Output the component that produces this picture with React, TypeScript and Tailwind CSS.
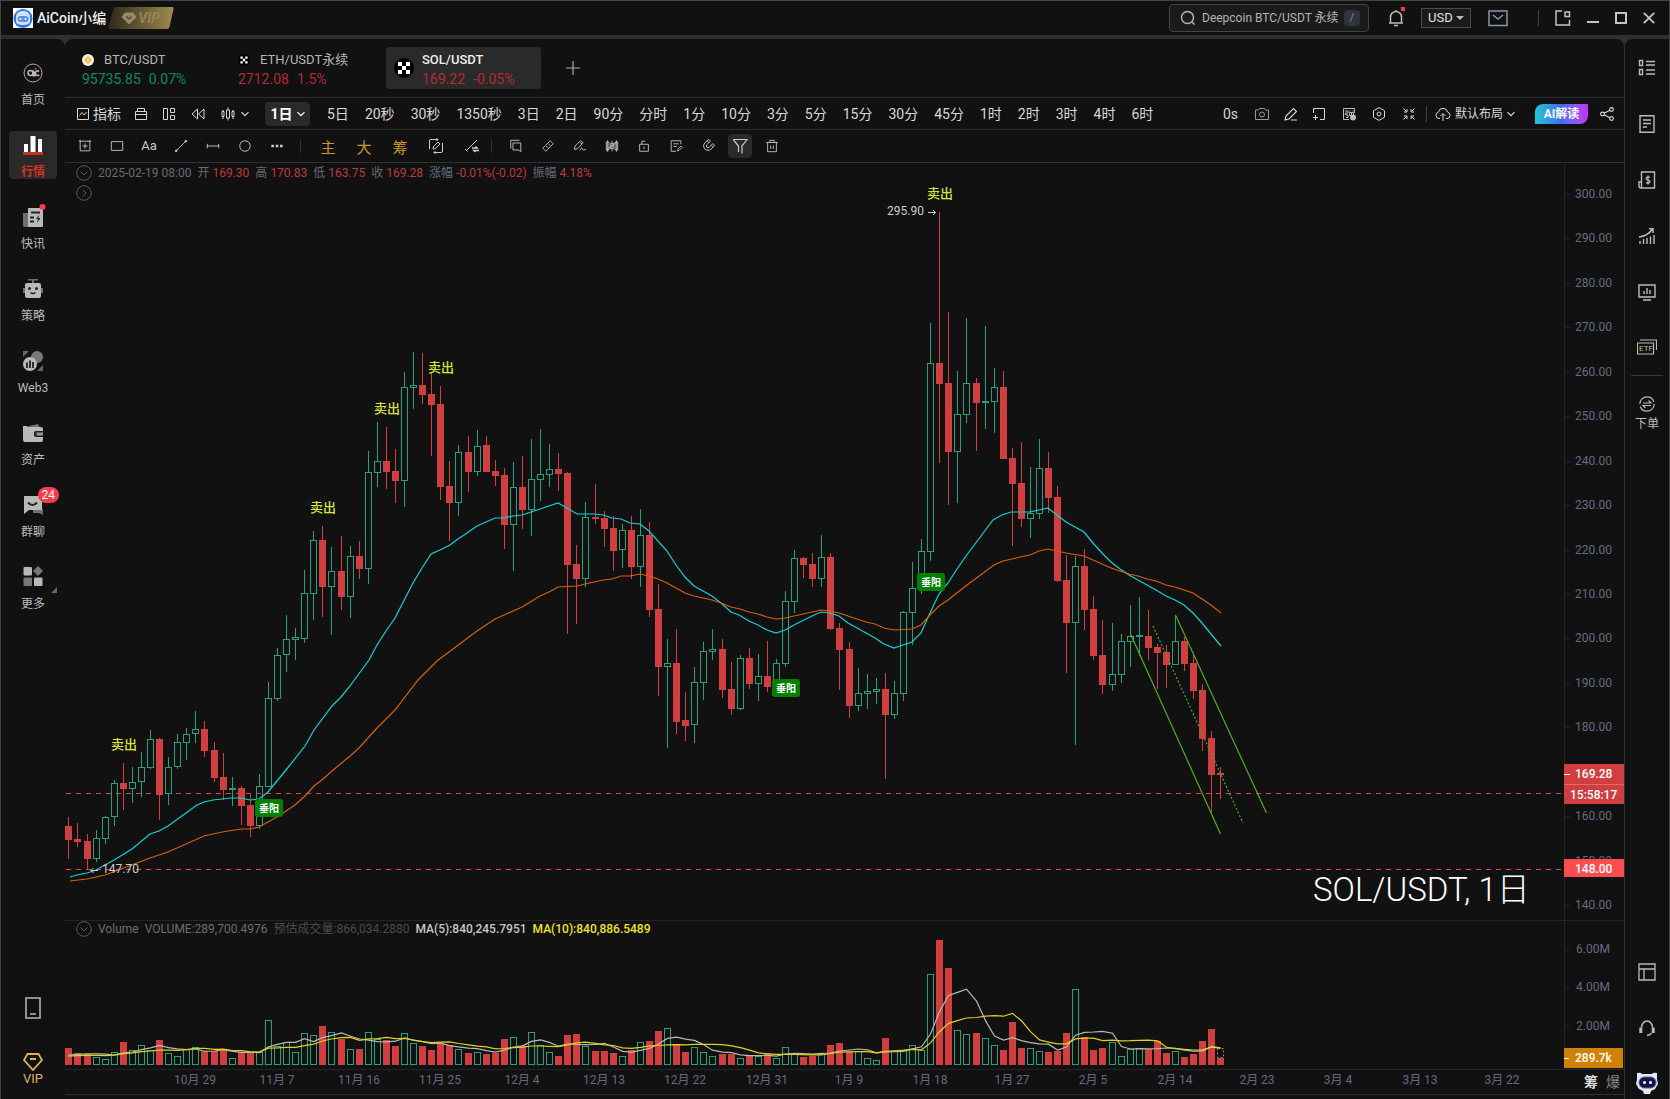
import { useState } from 'react';
import type { ReactNode } from 'react';

type Candle = [string, number, number, number, number, number];

// side, high, body top, body bottom, low, volume height
const candles: Candle[] = [
    ['r', 817, 826, 840, 859, 17], ['r', 823, 839, 842, 847, 12], ['r', 834, 841, 859, 870, 11], ['g', 830, 838, 859, 862, 8],
    ['g', 816, 817, 839, 844, 6], ['g', 780, 783, 817, 826, 13], ['r', 763, 783, 789, 810, 23], ['g', 767, 782, 789, 803, 15],
    ['g', 752, 767, 782, 797, 20], ['g', 730, 739, 768, 769, 15], ['r', 738, 739, 795, 820, 25], ['g', 757, 767, 794, 805, 12],
    ['g', 734, 742, 767, 769, 9], ['g', 728, 734, 743, 760, 16], ['g', 711, 729, 734, 743, 18], ['r', 721, 729, 751, 757, 13],
    ['r', 742, 750, 778, 782, 14], ['r', 753, 777, 790, 800, 16], ['g', 777, 788, 789, 806, 7], ['r', 786, 788, 806, 825, 13],
    ['r', 793, 805, 826, 837, 13], ['g', 774, 786, 826, 829, 13], ['g', 682, 698, 787, 787, 45], ['g', 648, 655, 699, 701, 19],
    ['g', 615, 639, 655, 672, 23], ['g', 628, 637, 640, 660, 13], ['g', 570, 593, 639, 643, 32], ['g', 531, 540, 594, 620, 30],
    ['r', 526, 540, 587, 617, 39], ['g', 547, 571, 587, 635, 33], ['r', 536, 571, 597, 610, 26], ['g', 546, 556, 597, 618, 16],
    ['r', 541, 556, 569, 579, 16], ['g', 451, 472, 569, 584, 33], ['g', 422, 461, 473, 487, 26], ['r', 427, 461, 472, 489, 25],
    ['r', 449, 471, 481, 503, 19], ['g', 372, 387, 481, 507, 32], ['g', 352, 385, 388, 409, 22], ['r', 353, 385, 395, 404, 19],
    ['r', 373, 394, 405, 456, 15], ['r', 386, 404, 487, 500, 21], ['r', 461, 486, 503, 541, 20], ['g', 445, 452, 503, 516, 16],
    ['r', 436, 452, 472, 492, 12], ['g', 430, 446, 472, 476, 13], ['r', 436, 445, 472, 472, 11], ['r', 460, 471, 476, 486, 12],
    ['r', 468, 475, 525, 549, 26], ['g', 462, 487, 525, 571, 28], ['r', 456, 487, 510, 529, 19], ['g', 439, 479, 510, 536, 33],
    ['g', 429, 474, 480, 501, 20], ['g', 444, 469, 475, 487, 13], ['r', 453, 469, 474, 491, 9], ['r', 472, 473, 565, 634, 30],
    ['r', 545, 564, 579, 624, 31], ['g', 502, 517, 579, 587, 19], ['r', 484, 517, 519, 524, 14], ['r', 511, 518, 529, 547, 14],
    ['r', 516, 528, 551, 571, 12], ['g', 524, 530, 550, 568, 9], ['r', 516, 530, 567, 579, 15], ['g', 509, 535, 567, 587, 23],
    ['r', 522, 535, 610, 617, 24], ['r', 584, 609, 667, 696, 34], ['g', 639, 663, 667, 748, 37], ['r', 629, 663, 722, 734, 21],
    ['r', 692, 720, 726, 741, 13], ['g', 667, 682, 725, 743, 18], ['g', 642, 651, 683, 700, 13], ['g', 629, 649, 652, 660, 9],
    ['r', 639, 649, 690, 698, 11], ['r', 662, 689, 709, 715, 11], ['g', 655, 658, 709, 710, 7], ['r', 648, 658, 684, 689, 9],
    ['g', 654, 676, 684, 701, 9], ['r', 641, 676, 687, 692, 12], ['g', 659, 663, 687, 690, 7], ['g', 591, 601, 664, 667, 18],
    ['g', 550, 558, 602, 613, 12], ['r', 557, 558, 565, 578, 8], ['r', 553, 564, 579, 587, 9], ['g', 535, 557, 579, 587, 11],
    ['r', 553, 557, 629, 630, 20], ['r', 623, 628, 650, 690, 22], ['r', 642, 649, 706, 718, 13], ['g', 668, 693, 706, 711, 14],
    ['g', 674, 691, 694, 709, 7], ['g', 678, 689, 692, 704, 5], ['r', 673, 689, 715, 779, 27], ['g', 681, 693, 715, 719, 14],
    ['g', 611, 612, 694, 701, 15], ['g', 562, 588, 613, 645, 20], ['g', 539, 551, 588, 594, 15], ['g', 323, 363, 552, 561, 91],
    ['r', 212, 363, 384, 463, 125], ['r', 312, 383, 452, 505, 97], ['g', 371, 414, 452, 503, 35], ['g', 318, 383, 415, 423, 31],
    ['r', 378, 383, 403, 451, 32], ['g', 326, 401, 403, 429, 27], ['g', 368, 387, 402, 433, 20], ['r', 371, 387, 459, 459, 15],
    ['r', 448, 458, 484, 546, 43], ['r', 442, 483, 519, 527, 17], ['g', 467, 513, 519, 538, 17], ['g', 439, 468, 514, 519, 14],
    ['r', 452, 468, 498, 513, 13], ['r', 486, 497, 581, 582, 14], ['r', 555, 580, 623, 673, 32], ['g', 556, 566, 623, 745, 76],
    ['r', 549, 566, 610, 630, 28], ['r', 596, 609, 656, 660, 15], ['r', 620, 655, 685, 694, 17], ['g', 623, 674, 685, 691, 23],
    ['g', 634, 641, 675, 683, 9], ['g', 605, 636, 642, 667, 16], ['g', 597, 635, 637, 656, 17], ['r', 610, 636, 648, 660, 16],
    ['r', 644, 647, 653, 689, 24], ['r', 645, 652, 665, 688, 12], ['g', 615, 641, 665, 665, 14], ['r', 637, 641, 664, 671, 8],
    ['r', 654, 663, 691, 699, 11], ['r', 684, 690, 739, 751, 24], ['r', 731, 738, 775, 813, 36], ['r', 767, 773, 775, 799, 7],
];

const fastLine =
    '70,877 77,875 87,873 96,870 114,860 132,849 150,834 159,831 168,826 186,813 197,805 204,802 213,800 231,798 241,798 250,800 259,799 268,792 277,781 286,770 305,746 314,730 332,706 341,697 350,686 369,660 377,645 386,631 395,618 413,583 422,568 431,554 440,550 450,545 458,539 467,533 477,526 495,518 504,518 513,516 522,515 531,512 540,509 558,503 567,508 577,514 594,514 603,515 612,518 621,519 630,523 640,524 649,531 667,551 676,565 685,577 694,586 712,596 721,603 731,612 739,615 749,621 758,625 767,630 776,633 785,630 794,625 812,616 821,612 830,613 839,616 848,623 857,628 875,638 884,644 894,648 903,645 912,642 921,633 930,613 939,594 948,583 957,569 966,556 984,532 993,520 1002,515 1011,512 1030,512 1039,510 1048,508 1057,515 1066,522 1075,527 1084,532 1093,543 1102,553 1111,562 1120,569 1129,575 1156,590 1166,596 1175,600 1184,605 1193,613 1202,623 1211,634 1221,646';

const slowLine =
    '70,881 87,879 96,877 105,875 150,858 168,852 204,836 222,832 241,829 250,829 259,827 277,817 295,805 305,796 314,786 323,779 332,771 350,756 359,748 377,728 395,710 418,680 438,660 449,652 477,631 495,619 504,615 513,611 522,607 540,596 549,592 558,587 577,586 585,584 603,580 612,579 621,576 630,576 640,574 649,576 658,579 667,583 685,593 694,596 712,600 721,603 731,607 740,609 749,612 758,614 767,617 776,619 785,618 803,614 821,610 830,611 839,613 866,622 875,624 884,628 894,630 912,629 921,625 930,615 939,606 948,600 967,585 994,565 1003,561 1012,559 1020,557 1030,555 1039,551 1048,549 1066,553 1084,556 1093,560 1111,568 1129,574 1138,576 1147,579 1156,581 1166,585 1175,587 1193,593 1211,605 1221,613';

const dates = ['10月 29', '11月 7', '11月 16', '11月 25', '12月 4', '12月 13', '12月 22', '12月 31', '1月 9', '1月 18', '1月 27', '2月 5', '2月 14', '2月 23', '3月 4', '3月 13', '3月 22'];
const prices = [300, 290, 280, 270, 260, 250, 240, 230, 220, 210, 200, 190, 180, 170, 160, 150, 140];
const periods = ['5日', '20秒', '30秒', '1350秒', '3日', '2日', '90分', '分时', '1分', '10分', '3分', '5分', '15分', '30分', '45分', '1时', '2时', '3时', '4时', '6时'];
const sellMarks = [[124, 749], [323, 512], [387, 413], [441, 372], [940, 198]];
const buyMarks = [[255, 799], [772, 679], [917, 573]];

const xOf = (i: number) => Math.round(68.4 + i * 9.071);

function volumeAverage(size: number) {
    const vols = candles.map((c) => c[5]);
    return vols
        .map((_, i) => {
            let sum = 0;
            for (let k = 0; k < size; k++) sum += vols[i - k] ?? 8;
            return `${xOf(i) + 0.5},${1065 - sum / size}`;
        })
        .join(' ');
}

function Icon({ box = 16, className = 'size-4', width = 1, children }: { box?: number; className?: string; width?: number; children: ReactNode }) {
    return (
        <svg viewBox={`0 0 ${box} ${box}`} className={`shrink-0 ${className}`} fill="none" stroke="currentColor" strokeWidth={width}>
            {children}
        </svg>
    );
}

function Chevron() {
    return (
        <Icon box={8} className="size-2" width={1.2}>
            <path d="M.5 2.2 4 5.7l3.5-3.5" />
        </Icon>
    );
}

function TitleBar() {
    return (
        <header className="flex h-[34px] shrink-0 items-center bg-[#111] pl-3 pr-3.5">
            <svg viewBox="0 0 20 20" className="size-5">
                <rect width="20" height="20" fill="#fff" />
                <circle cx="10" cy="10.5" r="9.5" fill="#2878ee" />
                <path d="M3 9c0-4 3-6 7-6s7 2 7 6v4c0 3-3 4-7 4s-7-1-7-4z" fill="#cfe2ff" />
                <rect x="4.5" y="8" width="11" height="6" rx="3" fill="#5e8fe0" />
                <circle cx="7.5" cy="11" r="1" fill="#fff" />
                <circle cx="12.5" cy="11" r="1" fill="#fff" />
            </svg>
            <span className="ml-1 text-sm font-medium text-[#eee]">AiCoin小编</span>
            <div className="relative ml-0.5 h-[22px] w-[66px]">
                <svg viewBox="0 0 66 22" className="h-full w-full">
                    <defs>
                        <linearGradient id="vip">
                            <stop offset="0" stopColor="#2c281c" />
                            <stop offset="1" stopColor="#a08b4a" />
                        </linearGradient>
                    </defs>
                    <path d="M8 0h56q2 0 1.5 2l-4 18q-.5 2-2.5 2H2q-2 0-1.5-2l5-18Q6 0 8 0z" fill="url(#vip)" />
                    <path d="M17 6h8l3 4-7 7-7-7z" fill="#958a66" stroke="#958a66" strokeLinejoin="round" />
                    <path d="m18.5 9.5 2.5 2.5 2.5-2.5" fill="none" stroke="#554b30" strokeWidth="1.5" />
                </svg>
                <span className="absolute left-[30px] top-0 text-sm leading-[22px] font-bold italic text-[#93865a]">VIP</span>
            </div>

            <label className="ml-auto flex h-7 w-[200px] items-center rounded-sm border border-[#444] bg-[#1b1b1b] pl-2.5 pr-2 text-[#b5b5b5]">
                <Icon width={1.5}>
                    <circle cx="7.5" cy="7.5" r="6" />
                    <path d="m12 12 2.5 2.5" />
                </Icon>
                <input aria-label="Deepcoin BTC/USDT 永续" placeholder="Deepcoin BTC/USDT 永续" className="ml-1.5 w-0 flex-1 bg-transparent text-xs outline-none placeholder:text-[#b5b5b5]" />
                <kbd className="grid size-4 place-items-center rounded-sm bg-[#30333e] font-[inherit] text-[11px] text-[#8a8f9c]">/</kbd>
            </label>
            <button className="relative ml-[18px] text-[#bbb]">
                <Icon box={18} className="size-[18px]" width={1.5}>
                    <path d="M2 14h14M3.500 14V8a5.500 5.500 0 0 1 11 0v6M7 16.500h4M9 1v1.500" />
                </Icon>
                <i className="absolute right-0 -top-0.5 size-1 bg-[#f6384a]" />
            </button>
            <div className="relative ml-4 h-5 w-[50px] border border-[#4a4a4a] bg-[#1b1b1b]">
                <select aria-label="USD" className="block h-[18px] w-full appearance-none bg-transparent pl-1.5 text-[13px] leading-[18px] text-[#e2e2e2] outline-none">
                    <option>USD</option>
                </select>
                <i className="pointer-events-none absolute right-1.5 top-[7px] border-x-4 border-t-4 border-x-transparent border-t-[#bbb]" />
            </div>
            <button className="ml-[17px] text-[#8d96a8]">
                <Icon box={20} className="size-5" width={1.5}>
                    <path d="M1 3h18v14.500H1zM5 7l5 4 5-4" />
                </Icon>
            </button>
            <i className="ml-[30px] h-4 w-px bg-[#444]" />
            <button className="ml-4 text-[#c4c4c4]">
                <Icon width={1.5}>
                    <path d="M7 1H1v14h13.500v-5M10 2h4.500v4.500H10z" />
                </Icon>
            </button>
            <button className="ml-4 text-[#c4c4c4]">
                <Icon box={12} className="size-3" width={2}>
                    <path d="M0 10h12" />
                </Icon>
            </button>
            <button className="ml-4 text-[#c4c4c4]">
                <Icon box={12} className="size-3" width={2}>
                    <path d="M1 1h10v10H1z" />
                </Icon>
            </button>
            <button className="ml-4 text-[#c4c4c4]">
                <Icon box={12} className="size-3" width={1.8}>
                    <path d="m.8.8 10.400 10.400M11.200.8.8 11.200" />
                </Icon>
            </button>
        </header>
    );
}

const navItems = [
    {
        label: '首页',
        icon: (
            <>
                <circle cx="10" cy="10" r="9" fill="none" stroke="#aaa" />
                <circle cx="7.5" cy="10" r="2.5" fill="none" stroke="#bbb" strokeWidth="1.5" />
                <path d="M10.200 7.200v5.500h1.500V8.500M16 8.500a2.200 2.200 0 1 0 .2 3.200" fill="none" stroke="#bbb" strokeWidth="1.5" />
                <circle cx="12.5" cy="5.8" r="1.1" fill="#e03a22" />
            </>
        ),
    },
    {
        label: '行情',
        icon: (
            <>
                <path d="M1 9h4v8H1zM7.500 1h5v16h-5zM15 4h4v13h-4z" fill="#fff" />
                <path d="M0 17h20v3H0z" fill="#c8301c" />
            </>
        ),
    },
    {
        label: '快讯',
        icon: (
            <>
                <path d="M0 6h5v14H2q-2 0-2-2z" fill="#707070" />
                <rect x="5" y="1" width="15" height="19" rx="1" fill="#b9b9b9" />
                <path d="M8 5.500h9M7 10.500h4M7 14.500h4" stroke="#222" strokeWidth="2" />
                <path d="m16 8-3 4h2l-1 4 3.500-5h-2z" fill="#222" />
                <circle cx="19.5" cy="0" r="3" fill="#fb3a4b" />
            </>
        ),
    },
    {
        label: '策略',
        icon: (
            <>
                <path d="M5 0h10v1.500h-4V4H9V1.500H5z" fill="#707070" />
                <path d="M0 9h2v5H0zM18 9h2v5h-2z" fill="#707070" />
                <rect x="2" y="4" width="16" height="15" rx="2" fill="#b9b9b9" />
                <circle cx="6.5" cy="9.5" r="1.5" fill="#222" />
                <circle cx="13.5" cy="9.5" r="1.5" fill="#222" />
                <path d="M7.500 13.500q2.500 2 5 0" fill="none" stroke="#222" strokeWidth="1.5" />
            </>
        ),
    },
    {
        label: 'Web3',
        icon: (
            <>
                <circle cx="14" cy="6" r="6" fill="#777" />
                <path d="M0 0h6L0 6zM20 14v6h-6z" fill="#666" />
                <circle cx="7" cy="13" r="7" fill="#b9b9b9" />
                <path d="M4 11.500V17M7 9.500V17M10 11V17" stroke="#222" strokeWidth="1.8" />
            </>
        ),
    },
    {
        label: '资产',
        icon: (
            <>
                <path d="m2 4 13-3 2 4z" fill="#707070" />
                <path d="M0 3h4v1h14q2 0 2 2v11q0 2-2 2H2q-2 0-2-2z" fill="#b9b9b9" />
                <path d="M20 8h-7q-2 0-2 2v2q0 2 2 2h7z" fill="#222" />
                <path d="M20 9.500h-6.500v3H20z" fill="#999" />
            </>
        ),
    },
    {
        label: '群聊',
        icon: (
            <>
                <path d="M10 14h10v6l-4-2h-6z" fill="#707070" />
                <path d="M1 1h18v14H6l-5 4z" fill="#b9b9b9" />
                <path d="M5 7.500q4.500 5 9 0" fill="none" stroke="#222" strokeWidth="2" />
            </>
        ),
    },
    {
        label: '更多',
        icon: (
            <>
                <rect x="0.5" width="8.5" height="8.5" rx="1" fill="#b9b9b9" />
                <rect x="11" y="10.5" width="8.5" height="8.5" rx="1" fill="#b9b9b9" />
                <rect x="0.5" y="10.5" width="8.5" height="8.5" rx="1" fill="#777" />
                <path d="m15-1 5 5-5 5-5-5z" fill="#777" />
            </>
        ),
    },
];

function SideNav() {
    const [active, setActive] = useState('行情');

    return (
        <nav className="flex w-16 shrink-0 flex-col items-center gap-6 rounded-tr-lg bg-[#111] pt-5 pb-3">
            {navItems.map((item) => (
                <button
                    key={item.label}
                    onClick={() => setActive(item.label)}
                    className={`relative flex h-12 w-12 flex-col items-center gap-[9px] rounded pt-1 text-xs ${
                        active === item.label ? 'bg-[#2a2a2a] font-bold text-[#cf3420]' : 'text-[#bcbcbc]'
                    }`}
                >
                    <svg viewBox="0 0 20 20" className="size-5 shrink-0 overflow-visible">{item.icon}</svg>
                    <span>{item.label}</span>
                    {item.label === '群聊' && (
                        <b className="absolute -right-0.5 -top-1 rounded-full bg-[#fb3a4b] px-1 text-xs font-normal text-white">24</b>
                    )}
                    {item.label === '更多' && <i className="absolute right-0 top-6 border-b-[6px] border-l-[6px] border-b-[#666] border-l-transparent" />}
                </button>
            ))}
            <button className="mt-auto text-[#bbb]">
                <svg viewBox="0 0 16 22" className="h-[22px] w-4" fill="none" stroke="currentColor" strokeWidth="1.5">
                    <path d="M1 1h14v20H1zM5 17h6" />
                </svg>
            </button>
            <button className="mt-2.5 flex flex-col items-center text-[#d8b55c]">
                <svg viewBox="0 0 20 18" className="h-[18px] w-5" fill="none" stroke="currentColor" strokeWidth="1.8">
                    <path d="M4.500 1h11L19 7l-9 10L1 7zM7 6h6" />
                </svg>
                <span className="text-[13px] leading-4">VIP</span>
            </button>
        </nav>
    );
}

function Okx({ className }: { className: string }) {
    return (
        <svg viewBox="0 0 20 20" className={`shrink-0 ${className}`}>
            <circle cx="10" cy="10" r="10" fill="#000" />
            <path d="M4 4h4v4H4zM12 4h4v4h-4zM8 8h4v4H8zM4 12h4v4H4zM12 12h4v4h-4z" fill="#fff" />
        </svg>
    );
}

function CoinTabs() {
    return (
        <div className="flex h-[59px] items-center border-b border-[#303030] pl-[17px]">
            <button className="w-[156px] pt-[3px] text-left">
                <span className="flex items-center gap-2.5 text-[13px] leading-[18px] text-[#b5b5b5]">
                    <svg viewBox="0 0 12 12" className="size-3">
                        <circle cx="6" cy="6" r="6" fill="#f1efe8" />
                        <path d="m6 2 4 4-4 4-4-4z" fill="#f0b93a" />
                        <path d="m6 4.500 1.500 1.500L6 7.500 4.500 6z" fill="#fff3d0" />
                    </svg>
                    BTC/USDT
                </span>
                <span className="flex gap-2 text-sm leading-5 text-[#0d8a5f]">
                    <span>95735.85</span>
                    <span>0.07%</span>
                </span>
            </button>
            <button className="w-[148px] pt-[3px] text-left">
                <span className="flex items-center gap-2.5 text-[13px] leading-[18px] text-[#b5b5b5]">
                    <Okx className="size-3" />
                    ETH/USDT永续
                </span>
                <span className="flex gap-2 text-sm leading-5 text-[#b32a38]">
                    <span>2712.08</span>
                    <span>1.5%</span>
                </span>
            </button>
            <button className="flex h-[42px] w-[155px] items-center gap-2 rounded bg-[#2a2a2a] pl-2 text-left">
                <Okx className="size-5" />
                <span className="pt-[3px]">
                    <span className="block text-[13px] leading-[18px] font-medium text-[#eee]">SOL/USDT</span>
                    <span className="flex gap-2 text-sm leading-5 text-[#b32a38]">
                        <span>169.22</span>
                        <span>-0.05%</span>
                    </span>
                </span>
            </button>
            <button aria-label="+" className="ml-[25px] text-[#aaa]">
                <Icon box={14} className="size-3.5" width={1.2}>
                    <path d="M7 0v14M0 7h14" />
                </Icon>
            </button>
        </div>
    );
}

function PeriodBar() {
    return (
        <div className="flex h-8 items-center border-b border-[#303030] pl-3 pr-2.5 text-sm whitespace-nowrap text-[#d8d8d8]">
            <button className="flex items-center gap-1">
                <Icon box={12} className="size-3">
                    <path d="M.5.5h11v11H.5zM2.500 7.500 5 4.500l2 2.500 2.500-3" />
                </Icon>
                指标
            </button>
            <button className="ml-3.5">
                <Icon box={12} className="size-3">
                    <path d="M.5 3.500h11v8H.5zM2.500 3.500v-3h7v3M.5 6.500h11" />
                </Icon>
            </button>
            <button className="ml-4">
                <Icon box={12} className="size-3">
                    <path d="M.5.5h4v11h-4zM7.500.5h4v4h-4zM7.500 7.500h4v4h-4z" />
                </Icon>
            </button>
            <button className="ml-4">
                <Icon box={14} className="size-3.5">
                    <path d="M6.500 2v10L1 7zM13 2v10L7.500 7z" />
                </Icon>
            </button>
            <button className="ml-4 flex items-center gap-1.5">
                <Icon box={14} className="size-3.5">
                    <path d="M1 4.500h2v5H1zM5.500 3h3v8h-3zM11 4.500h2v5h-2zM2 3v1.500M2 9.500V12M7 .5V3M7 11v2.500M12 3v1.500M12 9.500V12" />
                </Icon>
                <Chevron />
            </button>
            <button className="ml-4 flex h-6 w-[45px] items-center justify-center gap-1 rounded bg-[#2a2a2a] font-bold text-white">
                1日
                <Chevron />
            </button>
            <div className="ml-[17px] flex gap-4">
                {periods.map((p) => (
                    <button key={p}>{p}</button>
                ))}
            </div>
            <div className="ml-auto flex items-center">
                <button>0s</button>
                <button className="ml-4 text-[#999]">
                    <Icon>
                        <path d="M1.500 4h3l1-1.500h5l1 1.500h3v9.500h-13z" />
                        <circle cx="8" cy="8.5" r="2.5" />
                    </Icon>
                </button>
                <button className="ml-3.5">
                    <Icon box={14} className="size-3.5" width={1.1}>
                        <path d="m1 13 1-4 7.500-7.500 3 3L5 12zM7 13h6" />
                    </Icon>
                </button>
                <button className="ml-3.5">
                    <Icon box={14} className="size-3.5">
                        <path d="M1.500 6V1.500h11v11H8M3.500 8v5M1 10.500h5" />
                    </Icon>
                </button>
                <button className="ml-4 text-[#bbb]">
                    <Icon box={14} className="size-3.5">
                        <path d="M12.500 6V1.500h-11v11H7M3 4h3v2H3.500v2H6v2.500H4M8 3.500v1M11 3.500v1M7.500 5.500h4v3h-4zM9.500 5.500v5" />
                        <circle cx="11" cy="10.5" r="3" fill="#bbb" stroke="none" />
                    </Icon>
                </button>
                <button className="ml-4">
                    <Icon box={14} className="size-3.5">
                        <path d="M7 .6 12.500 3.700v6.600L7 13.400 1.500 10.300V3.700z" />
                        <circle cx="7" cy="7" r="2" />
                    </Icon>
                </button>
                <button className="ml-4">
                    <Icon box={14} className="size-3.5">
                        <path d="m1.500 1.500 3 3M5 2v3H2M12.500 1.500l-3 3M9 2v3h3M1.500 12.500l3-3M2 9h3v3M12.500 12.500l-3-3M12 9H9v3" />
                    </Icon>
                </button>
                <i className="ml-2.5 h-4 w-px bg-[#444]" />
                <button className="ml-2 flex items-center gap-1 text-xs">
                    <Icon>
                        <path d="M5 12.500H4a3.300 3.300 0 0 1-.5-6.500 4.600 4.600 0 0 1 9 0 3.300 3.300 0 0 1-.5 6.500h-1M8 15V8M5.500 10 8 7.500l2.500 2.500" />
                    </Icon>
                    默认布局
                    <Chevron />
                </button>
                <button className="ml-5 h-5 w-[53px] rounded-tl-lg rounded-br-lg bg-linear-to-r from-[#28c4cf] via-[#3c6cf5] to-[#c42df5] text-xs font-bold text-white">AI解读</button>
                <button className="ml-3">
                    <Icon box={14} className="size-3.5" width={1.1}>
                        <circle cx="2.5" cy="7" r="1.9" />
                        <circle cx="11.5" cy="2.5" r="1.9" />
                        <circle cx="11.5" cy="11.5" r="1.9" />
                        <path d="m4.200 6.200 5.600-2.900M4.200 7.800l5.600 2.900" />
                    </Icon>
                </button>
            </div>
        </div>
    );
}

const drawTools = [
    <path d="M2.500 2.500h11v11h-11zM8 5v6M5 8h6M2.500 1v1.500H1M13.500 1v1.500H15" />,
    <path d="M1.500 3h13v10h-13z" />,
    null,
    <><path d="m3 13 10-10" /><circle cx="2.5" cy="13.5" r="1" fill="currentColor" /><circle cx="13.5" cy="2.5" r="1" fill="currentColor" /></>,
    <path d="M1 8h14M1.500 5.500v5M14.500 5.500v5" />,
    <circle cx="8" cy="8" r="6" />,
    <path d="M1.500 8h3M6.500 8h3M11.500 8h3" strokeWidth="3" />,
];

const editTools = [
    <path d="M4.500 4.500h9v10l-3-2h-6zM2 11V1.500h10" />,
    <path d="m2 10.500 8.500-8.500L14 5.500 5.500 14 2 10.500zM6 8l2 2M8.500 5.500l2 2" />,
    <path d="m1.500 12 1-4 6-6 3 2-6 7zM8 4l2.500 2M8 13c2-5 3-2 3-1s2 1 4-.5" />,
    <path d="M1.500 3.500h3v9h-3zM6.500 5h3v6h-3zM11.500 3.500h3v9h-3zM3 1.500v13M13 1.500v13M8 2v12M1 13 14 3" />,
    <path d="M3 6h10v8H3zM5.500 6V2.500h4M8 8.500v3" />,
    <path d="M13.500 6V2h-11v12H8M5 5.500h6M5 8.500h4M9.500 13.500l.5-2 3.500-3.500 1.500 1.500-3.500 3.500z" />,
    <path d="M3 2v6a5 5 0 0 0 10 0V2h-3v6a2 2 0 0 1-4 0V2zM3 4.500h3M10 4.500h3" transform="rotate(45 8 8)" />,
    <path d="M1 1.500h14L10 8v7.500M1.500 2 6.500 8v6" strokeWidth="1.2" />,
    <path d="M1.500 4h13M5.500 4V1.500h5V4M3 4v10.500h10V4M6.500 7.500v4M9.500 7.500v4" />,
];

function DrawBar() {
    return (
        <div className="flex h-[33px] items-center border-b border-[#303030] pl-2 text-[#ccc]">
            <div className="flex gap-2">
                {drawTools.map((tool, i) => (
                    <button key={i} className="grid size-6 place-items-center text-[13px]">
                        {tool ? <Icon className="size-3.5">{tool}</Icon> : 'Aa'}
                    </button>
                ))}
            </div>
            <i className="ml-[11px] h-3.5 w-px bg-[#2e333d]" />
            <div className="ml-[15px] flex gap-3">
                {['主', '大', '筹'].map((t) => (
                    <button key={t} className="grid size-6 place-items-center pt-1 text-[15px] leading-5 text-[#c79a2c]">{t}</button>
                ))}
                <button className="grid size-6 place-items-center">
                    <Icon>
                        <path d="M1.500 11V3q0-1.500 1.500-1.500h7M8.500 0 10 1.500 8.500 3M14.500 5v8q0 1.500-1.500 1.500H6M7.500 13 6 14.500 7.500 16M5 11l.5-2.500L10 4l2 2-4.500 4.500z" />
                    </Icon>
                </button>
                <button className="grid size-6 place-items-center">
                    <Icon>
                        <path d="m2 13 11-11M1 11l2.500 2.500" />
                        <path d="M8 10h5l-1.500-1.500M15 12.500h-5l1.500 1.500" strokeWidth="1.6" />
                    </Icon>
                </button>
            </div>
            <i className="ml-[7px] h-3.5 w-px bg-[#2e333d]" />
            <div className="ml-3 flex gap-2">
                {editTools.map((tool, i) => (
                    <button key={i} className={`grid size-6 place-items-center rounded ${i === 7 ? 'bg-[#2a2a2a]' : ''}`}>
                        <Icon className={i === 7 ? 'size-4' : 'size-3.5'}>{tool}</Icon>
                    </button>
                ))}
            </div>
        </div>
    );
}

function RoundToggle({ right }: { right?: boolean }) {
    return (
        <button className="block text-[#5a5a5f]">
            <Icon className="size-4">
                <circle cx="8" cy="8" r="7.3" />
                <path d={right ? 'M6.500 4.500 10 8l-3.500 3.500' : 'M4.500 6.500 8 10l3.500-3.500'} />
            </Icon>
        </button>
    );
}

function Chart() {
    return (
        <div className="relative">
            <svg viewBox="65 163 1559 931" className="block h-auto w-full" fontSize="12">
                <g stroke="#22242b" shapeRendering="crispEdges">
                    <path d="M65 920.500h1559M65 1069.500h1559M1564.500 164v905" />
                    {prices.map((p, i) => (
                        <path key={p} d={`M1564 ${194.5 + Math.round(i * 44.44)}h6`} />
                    ))}
                    <path d="M1564 949.500h6M1564 987.500h6M1564 1026.500h6" />
                </g>
                <g fill="#646b80">
                    {/* 170 sits under the last price tag */}
                    {prices.map((p, i) => p !== 170 && (
                        <text key={p} x="1575" y={198 + Math.round(i * 44.44)}>{p}.00</text>
                    ))}
                    <text x="1576" y="953">6.00M</text>
                    <text x="1576" y="991">4.00M</text>
                    <text x="1576" y="1030">2.00M</text>
                    {dates.map((d, i) => (
                        <text key={d} x={xOf(14 + i * 9)} y="1084" textAnchor="middle">{d}</text>
                    ))}
                </g>

                <g stroke="#e0474b" strokeDasharray="5 5" shapeRendering="crispEdges">
                    <path d="M66 793.500h1498M66 869.500h1498" />
                </g>

                <g shapeRendering="crispEdges">
                    {candles.map(([side, high, top, bottom, low, vol], i) => {
                        const x = xOf(i);
                        if (side === 'r') {
                            return (
                                <g key={i} fill="#d03e3f">
                                    <rect x={x} y={high} width="1" height={low - high} />
                                    <rect x={x - 3} y={top} width="7" height={bottom - top} />
                                    <rect x={x - 3} y={1065 - vol} width="7" height={vol} />
                                </g>
                            );
                        }
                        return (
                            <g key={i} fill="none" stroke="#26a17b">
                                <path d={`M${x + 0.5} ${high}V${top}M${x + 0.5} ${bottom}V${low}`} />
                                <rect x={x - 2.5} y={top + 0.5} width="6" height={Math.max(bottom - top - 1, 1)} />
                                <rect x={x - 2.5} y={1065.5 - vol} width="6" height={vol - 1} />
                            </g>
                        );
                    })}
                </g>
                <rect x="1217.5" y="1048.5" width="6" height="9" fill="none" stroke="#888" strokeDasharray="2 2" />

                <g fill="none" strokeWidth="1.2">
                    <polyline points={fastLine} stroke="#10d2d8" />
                    <polyline points={slowLine} stroke="#d66008" />
                    <polyline points={volumeAverage(5)} stroke="#b8b8b8" />
                    <polyline points={volumeAverage(10)} stroke="#ddd21f" />
                    <path d="m1131 635 89.500 199M1175.500 615l91 198" stroke="#4fae1c" />
                    <path d="m1153 626 90 197" stroke="#4fae1c" strokeDasharray="2 2" />
                </g>

                {sellMarks.map(([x, y]) => (
                    <text key={x} x={x} y={y} textAnchor="middle" fontSize="13" fontWeight="500" fill="#d9e43a">卖出</text>
                ))}
                {buyMarks.map(([x, y]) => (
                    <g key={x}>
                        <rect x={x} y={y} width="28" height="18" rx="3" fill="#008000" />
                        <text x={x + 14} y={y + 13} textAnchor="middle" fontSize="10" fontWeight="700" fill="#fff">垂阳</text>
                    </g>
                ))}

                <g fill="#ccc">
                    <text x="102" y="873">147.70</text>
                    <text x="887" y="215">295.90</text>
                </g>
                <path d="M98 870.500h-7m2.500-2.500-2.500 2.500 2.500 2.500M928 212.500h7.500m-2.500-2.500 2.500 2.500-2.500 2.500" fill="none" stroke="#ccc" />

                <text x="1313" y="901" fontSize="33" fontWeight="300" fill="#fff">SOL/USDT, 1日</text>

                <rect x="1564" y="764" width="60" height="40" fill="#d03e3f" />
                <rect x="1564" y="859" width="60" height="18" fill="#ff4d4f" />
                <rect x="1564" y="1048" width="59" height="20" fill="#cf8206" />
                <path d="M1564 784.500h60" stroke="#de6b6c" />
                <path d="M1564 774.500h6M1564 1058.500h5" stroke="#fff" />
                <g fill="#fff" fontWeight="500">
                    <text x="1575" y="778">169.28</text>
                    <text x="1570" y="799">15:58:17</text>
                    <text x="1575" y="873">148.00</text>
                    <text x="1575" y="1062">289.7k</text>
                </g>
            </svg>

            <div className="absolute left-[11px] top-0.5 flex flex-col gap-1 text-xs text-[#666b78]">
                <div className="flex items-center gap-1.5">
                    <RoundToggle />
                    <span>2025-02-19 08:00</span>
                    {[['开', '169.30'], ['高', '170.83'], ['低', '163.75'], ['收', '169.28'], ['涨幅', '-0.01%(-0.02)'], ['振幅', '4.18%']].map(([k, v]) => (
                        <span key={k} className="flex gap-[3px]">
                            {k}
                            <span className="text-[#bd3a3c]">{v}</span>
                        </span>
                    ))}
                </div>
                <RoundToggle right />
            </div>

            <div className="absolute left-[11px] bottom-[157px] flex items-center gap-1.5 text-xs text-[#6b6d76]">
                <RoundToggle />
                <span>Volume</span>
                <span>VOLUME:289,700.4976</span>
                <span className="text-[#4a4b50]">预估成交量:866,034.2880</span>
                <span className="font-medium text-[#c8c8c8]">MA(5):840,245.7951</span>
                <span className="font-medium text-[#efe41f]">MA(10):840,886.5489</span>
            </div>

            <div className="absolute right-1 bottom-0.5 flex gap-2 text-sm text-[#888]">
                <button className="font-bold text-[#ddd]">筹</button>
                <button>爆</button>
            </div>
        </div>
    );
}

function RightBar() {
    const tools = [
        <path d="M1.500 1.500h3v5h-3zM1.500 10.500h3v5h-3zM8 2.500h9M8 6h9M8 11h9M8 15h9" />,
        <path d="M2 .8h14v16.500H2zM5 5h8M5 8.500h8M5 12h4" />,
        <><path d="M3.500 1h13v16h-13zM3.500 11H1v4q0 2 2 2h2" /><path d="M12 6.500q-2-1.500-3.500 0t1.500 2.500 1.500 2.500-3.500 0M10 4.500v9" strokeWidth="1.2" /></>,
        <path d="M2 17v-3M5.500 17v-5M9 17v-6M12.500 17V9.500M16 17V8M1 10q9-1 13.500-8M11 1.800h4V6" />,
        <path d="M1 2h16v12H1zM5 17h8M6 11V8M9 11V5M12 11V7" />,
    ];
    return (
        <aside className="flex w-[45px] shrink-0 flex-col items-center rounded-tl-lg border-l border-[#303030] bg-[#111] pt-5 pb-1 text-[#bbb]">
            <div className="flex flex-col items-center gap-[38px]">
                {tools.map((tool, i) => (
                    <button key={i}>
                        <Icon box={18} className="size-[18px]" width={1.4}>{tool}</Icon>
                    </button>
                ))}
                <button className="relative">
                    <svg viewBox="0 0 20 16" className="h-4 w-5" fill="none" stroke="currentColor">
                        <path d="M3 1h16.500v10M.5 4h16v11H.5z" strokeWidth="1.2" />
                    </svg>
                    <span className="absolute left-0.5 top-1 text-[8px] leading-3 text-[#d8b98a]">ETF</span>
                </button>
            </div>
            <i className="mt-5 h-px w-8 bg-[#3a3a3a]" />
            <button className="mt-5 flex flex-col items-center gap-1 text-xs">
                <Icon width={1.2}>
                    <circle cx="8" cy="8" r="7.2" strokeDasharray="20 2.6" />
                    <path d="M4 7h8L9.500 4.500M12 9.500H4L6.500 12" />
                </Icon>
                下单
            </button>
            <button className="mt-auto">
                <Icon box={18} className="size-[18px]" width={1.3}>
                    <path d="M1 1h16v16H1zM1 6h16M6 6v11" />
                </Icon>
            </button>
            <button className="mt-[38px]">
                <Icon box={18} className="size-[18px]" width={1.5}>
                    <path d="M3.500 8.500a5.500 6.500 0 0 1 11 0M13.500 14q-1 2-4.500 2.500" />
                    <path d="M2.800 8.500v5.500M15.200 8.500v5.500" strokeWidth="3" />
                </Icon>
            </button>
            <button className="mt-[34px]">
                <svg viewBox="0 0 24 24" className="size-6">
                    <path d="M2 2q4-1 5 1h10q1-2 5-1v6l1 5-3 5-4 2-1 3H9l-1-3-4-2-3-5 1-5z" fill="#e4e8f4" />
                    <rect x="4" y="6" width="17" height="11" rx="5.5" fill="#14173a" stroke="#6a54d8" />
                    <circle cx="9.5" cy="11.5" r="1.5" fill="#fff" />
                    <circle cx="15.5" cy="11.5" r="1.5" fill="#fff" />
                </svg>
            </button>
        </aside>
    );
}

export default function App() {
    return (
        <div className="flex min-h-screen flex-col border border-b-0 border-[#444] bg-[#303030] font-['Roboto','Noto_Sans_CJK_SC',sans-serif]">
            <TitleBar />
            <div className="mt-1 flex flex-1">
                <SideNav />
                <main className="min-w-0 flex-1 rounded-t-lg bg-[#111]">
                    <CoinTabs />
                    <PeriodBar />
                    <DrawBar />
                    <Chart />
                    <div className="border-t border-[#303030]" />
                </main>
                <RightBar />
            </div>
        </div>
    );
}
